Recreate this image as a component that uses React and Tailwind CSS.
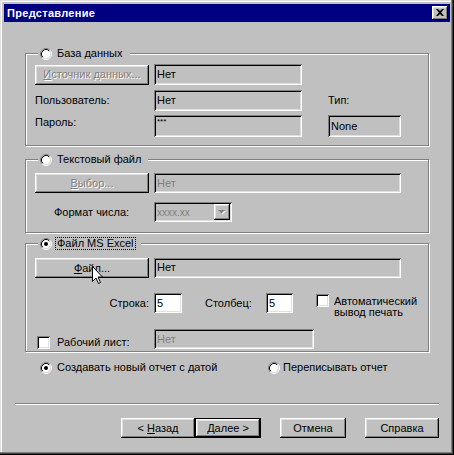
import React from "react";

const RAISED =
  "shadow-[inset_-1px_-1px_0_#000,inset_1px_1px_0_#fff,inset_-2px_-2px_0_#808080,inset_2px_2px_0_#dfdfdf]";
const SUNKEN =
  "shadow-[inset_1px_1px_0_#808080,inset_-1px_-1px_0_#fff,inset_2px_2px_0_#000,inset_-2px_-2px_0_#dfdfdf]";

function Radio({ checked }) {
  return (
    <svg width="12" height="12" viewBox="0 0 12 12" className="shrink-0">
      <circle cx="6" cy="6" r="4.5" fill="#fff" />
      <path d="M2.11 9.89 A5.5 5.5 0 0 1 9.89 2.11" fill="none" stroke="#808080" />
      <path d="M9.89 2.11 A5.5 5.5 0 0 1 2.11 9.89" fill="none" stroke="#fff" />
      <path d="M2.82 9.18 A4.5 4.5 0 0 1 9.18 2.82" fill="none" stroke="#000" />
      <path d="M9.18 2.82 A4.5 4.5 0 0 1 2.82 9.18" fill="none" stroke="#dfdfdf" />
      {checked && <circle cx="6" cy="6" r="2" fill="#000" />}
    </svg>
  );
}

function Check() {
  return <div className={`w-[13px] h-[13px] shrink-0 bg-white ${SUNKEN}`} />;
}

function Btn({ children, className = "", disabled }) {
  return (
    <div
      className={`flex items-center justify-center h-[20px] shrink-0 bg-[#c0c0c0] ${RAISED} ${
        disabled ? "text-[#808080] [text-shadow:1px_1px_0_#fff]" : "text-black"
      } ${className}`}
    >
      {children}
    </div>
  );
}

function Field({ children, className = "", white, disabled }) {
  return (
    <div
      className={`flex items-center pl-[3px] shrink-0 ${SUNKEN} ${white ? "bg-white" : "bg-[#c0c0c0]"} ${
        disabled ? "text-[#808080]" : "text-black"
      } ${className}`}
    >
      {children}
    </div>
  );
}

function Group({ className, legend, checked, focus, children }) {
  return (
    <div
      className={`relative ml-[21px] w-[404px] border border-[#808080] shadow-[1px_1px_0_#fff,inset_1px_1px_0_#fff] ${className}`}
    >
      <div className="absolute left-[12px] top-[-7px] flex items-center h-[13px] bg-[#c0c0c0] pl-[2px] pr-[5px]">
        <Radio checked={checked} />
        <span
          className={`ml-[3px] leading-[11px] px-[1px] border border-dotted ${
            focus ? "border-black" : "border-transparent"
          }`}
        >
          {legend}
        </span>
      </div>
      {children}
    </div>
  );
}

export default function App() {
  return (
    <div className="w-[454px] h-[455px] bg-[#c0c0c0] pt-[4px] px-[4px] font-['Liberation_Sans',Arial,sans-serif] text-[11px] leading-[13px] text-black shadow-[inset_-1px_-1px_0_#000,inset_-2px_-2px_0_#404040,inset_-3px_-3px_0_#808080,inset_1px_1px_0_#dfdfdf,inset_2px_2px_0_#fff] overflow-hidden">
      {/* Title bar */}
      <div className="h-[18px] bg-[#000080] flex items-center justify-between pl-[3px] pr-[2px]">
        <span className="text-white font-bold text-[11px] tracking-[0.3px]">Представление</span>
        <div className={`w-[16px] h-[14px] bg-[#c0c0c0] flex items-center justify-center ${RAISED}`}>
          <svg width="8" height="7" viewBox="0 0 8 7" className="mb-[1px]">
            <path d="M0 0h2l2 2 2-2h2L5 3.5 8 7H6L4 5 2 7H0l3-3.5z" fill="#000" />
          </svg>
        </div>
      </div>

      {/* Group 1 */}
      <Group className="mt-[31px] h-[93px]" legend="База данных">
        <div className="flex flex-col pl-[9px] pt-[10px]">
          <div className="flex items-center h-[21px]">
            <Btn disabled className="w-[114px]">
              <span>
                <span className="underline">И</span>сточник данных...
              </span>
            </Btn>
            <Field className="ml-[5px] w-[148px] h-[21px]">Нет</Field>
          </div>
          <div className="flex items-center mt-[5px]">
            <span className="w-[119px] shrink-0">Пользователь:</span>
            <Field className="w-[148px] h-[21px]">Нет</Field>
            <span className="ml-[26px]">Тип:</span>
          </div>
          <div className="flex items-start mt-[4px]">
            <span className="w-[119px] shrink-0 pt-[1px]">Пароль:</span>
            <Field className="w-[148px] h-[22px] !items-start pt-[3px]">
              <span className="text-[8px] leading-[8px]">***</span>
            </Field>
            <Field className="ml-[26px] w-[73px] h-[22px]">None</Field>
          </div>
        </div>
      </Group>

      {/* Group 2 */}
      <Group className="mt-[13px] h-[74px]" legend="Текстовый файл">
        <div className="flex flex-col pl-[9px] pt-[13px]">
          <div className="flex items-center">
            <Btn disabled className="w-[114px]">
              <span>
                <span className="underline">В</span>ыбор...
              </span>
            </Btn>
            <Field disabled className="ml-[5px] w-[247px] h-[20px]">
              Нет
            </Field>
          </div>
          <div className="flex items-center mt-[9px]">
            <span className="w-[119px] shrink-0 pl-[19px]">Формат числа:</span>
            <div className={`w-[78px] h-[20px] bg-[#c0c0c0] flex items-center p-[2px] ${SUNKEN}`}>
              <span className="flex-1 pl-[1px] text-[#808080] text-[10px]">xxxx.xx</span>
              <div className={`w-[16px] h-[16px] bg-[#c0c0c0] flex items-center justify-center ${RAISED}`}>
                <svg width="8" height="5" viewBox="0 0 8 5">
                  <path d="M1 1h7L4.5 4.5z" fill="#fff" />
                  <path d="M0 0h7L3.5 3.5z" fill="#808080" />
                </svg>
              </div>
            </div>
          </div>
        </div>
      </Group>

      {/* Group 3 */}
      <Group className="mt-[10px] h-[109px]" legend="Файл MS Excel" checked focus>
        <div className="flex flex-col pl-[9px] pt-[13px]">
          <div className="flex items-center">
            <Btn className="w-[114px] mt-[1px]">
              <span>
                <span className="underline">Ф</span>айл...
              </span>
            </Btn>
            <Field className="ml-[5px] w-[247px] h-[20px]">Нет</Field>
          </div>
          <div className="flex items-start mt-[15px]">
            <span className="w-[114px] shrink-0 text-right h-[20px] flex items-center justify-end">Строка:</span>
            <Field white className="ml-[5px] w-[28px] h-[20px]">
              5
            </Field>
            <span className="ml-[23px] w-[61px] shrink-0 h-[20px] flex items-center">Столбец:</span>
            <Field white className="w-[27px] h-[20px]">
              5
            </Field>
            <div className="ml-[23px] mt-[1px]">
              <Check />
            </div>
            <div className="ml-[5px] mt-[3px] leading-[11px]">
              <div>Автоматический</div>
              <div>вывод печать</div>
            </div>
          </div>
          <div className="flex items-start mt-[11px]">
            <div className="w-[119px] shrink-0 flex items-center h-[13px] mt-[7px] pl-[2px]">
              <Check />
              <span className="ml-[7px]">Рабочий лист:</span>
            </div>
            <Field disabled className="w-[160px] h-[20px]">
              Нет
            </Field>
          </div>
        </div>
        {/* mouse cursor */}
        <svg
          width="12"
          height="19"
          viewBox="0 0 12 19"
          className="absolute left-[66px] top-[22px] pointer-events-none"
        >
          <path
            d="M0.5 0.5 L0.5 15.5 L4 12 L6.5 17.5 L8.5 16.5 L6 11 L10.5 11 Z"
            fill="#fff"
            stroke="#000"
            strokeWidth="1"
          />
        </svg>
      </Group>

      {/* Radio options */}
      <div className="flex items-center h-[13px] mt-[9px] ml-[36px]">
        <div className="flex items-center w-[228px]">
          <Radio checked />
          <span className="ml-[5px]">Создавать новый отчет с датой</span>
        </div>
        <div className="flex items-center">
          <Radio />
          <span className="ml-[3px]">Переписывать отчет</span>
        </div>
      </div>

      {/* Separator */}
      <div className="ml-[11px] w-[424px] h-[2px] mt-[29px] border-t border-[#808080] border-b border-b-white" />

      {/* Buttons */}
      <div className="flex mt-[13px]">
        <Btn className="ml-[117px] w-[74px]">
          <span>
            &lt; <span className="underline">Н</span>азад
          </span>
        </Btn>
        <div className="w-[66px] h-[20px] border border-black">
          <Btn className="w-[64px] !h-[18px]">Далее &gt;</Btn>
        </div>
        <Btn className="ml-[19px] w-[66px]">Отмена</Btn>
        <Btn className="ml-[19px] w-[74px]">Справка</Btn>
      </div>
    </div>
  );
}
